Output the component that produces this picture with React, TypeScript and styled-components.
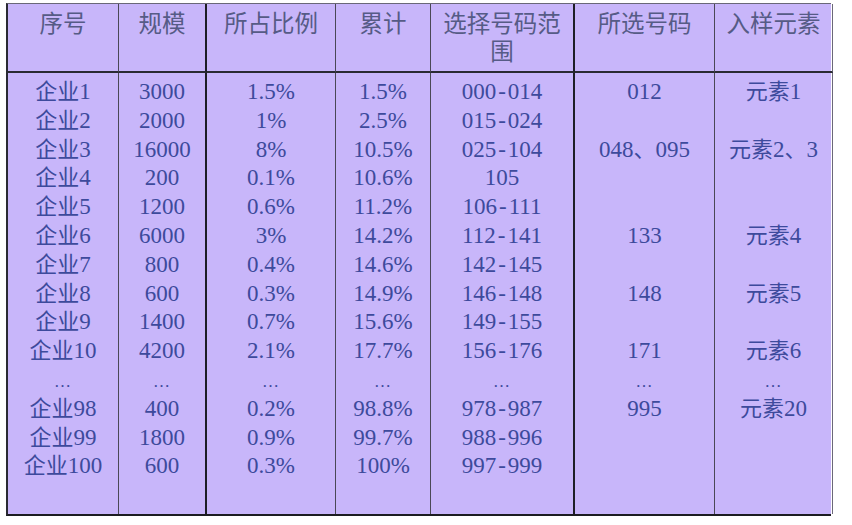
import React from "react";
import styled, { createGlobalStyle } from "styled-components";

const SERIF = `"Liberation Serif", "Times New Roman", "DejaVu Serif", "Noto Sans CJK SC", serif`;

const Global = createGlobalStyle`
  html, body { margin: 0; padding: 0; background: #ffffff; }
  body { font-family: ${SERIF}; }
`;

const Page = styled.div`
  padding: 3px 0 0 6px;
  width: 852px;
  height: 525px;
  box-sizing: border-box;
`;

const Table = styled.div`
  display: grid;
  grid-template-columns: 111px 88px 129px 95px 144px 140px 118px;
  grid-template-rows: 69px 441px;
  width: 825px;
  background: #c8b6fa;
  border-top: 1.5px solid #6a6878;
  border-left: 2px solid #2a2a33;
  border-bottom: 2px solid #1c1c22;
  box-sizing: border-box;
  font-family: ${SERIF};
`;

const Cell = styled.div<{ $heavy?: boolean; $last?: boolean }>`
  box-sizing: border-box;
  border-right: ${(p) =>
    p.$heavy ? "2px solid #1e1e26" : p.$last ? "1.5px solid #6a6878" : "1.5px solid #4a4856"};
  text-align: center;
`;

const HeadCell = styled(Cell)`
  border-bottom: 2px solid #2a2a33;
  padding: 4px 9px 0;
  font-size: 23.5px;
  line-height: 28px;
  color: #565b86;
  font-family: "Noto Sans CJK SC", sans-serif;
`;

const BodyCell = styled(Cell)`
  padding-top: 5px;
  display: flex;
  flex-direction: column;
  align-items: center;
`;

const Line = styled.div`
  height: 28.8px;
  line-height: 28.8px;
  font-size: 23px;
  color: #3d4a9c;
  white-space: nowrap;
  font-family: ${SERIF};
`;

const Dots = styled(Line)`
  font-size: 17px;
  line-height: 31px;
  letter-spacing: 1px;
`;

const Cjk = styled.span`
  font-family: "Noto Sans CJK SC", sans-serif;
  line-height: 1;
  font-size: 22px;
`;

const Sep = styled.span`
  padding: 0 2px;
`;

const ELL = "…";

const headers = ["序号", "规模", "所占比例", "累计", "选择号码范围", "所选号码", "入样元素"];

const heavyCols = [1, 4];

const columns: string[][] = [
  ["企业1", "企业2", "企业3", "企业4", "企业5", "企业6", "企业7", "企业8", "企业9", "企业10", ELL, "企业98", "企业99", "企业100"],
  ["3000", "2000", "16000", "200", "1200", "6000", "800", "600", "1400", "4200", ELL, "400", "1800", "600"],
  ["1.5%", "1%", "8%", "0.1%", "0.6%", "3%", "0.4%", "0.3%", "0.7%", "2.1%", ELL, "0.2%", "0.9%", "0.3%"],
  ["1.5%", "2.5%", "10.5%", "10.6%", "11.2%", "14.2%", "14.6%", "14.9%", "15.6%", "17.7%", ELL, "98.8%", "99.7%", "100%"],
  ["000-014", "015-024", "025-104", "105", "106-111", "112-141", "142-145", "146-148", "149-155", "156-176", ELL, "978-987", "988-996", "997-999"],
  ["012", "", "048、095", "", "", "133", "", "148", "", "171", ELL, "995", "", ""],
  ["元素1", "", "元素2、3", "", "", "元素4", "", "元素5", "", "元素6", ELL, "元素20", "", ""],
];

function renderText(t: string) {
  const parts = t.split(/([\u3000-\u9fff]+|-)/).filter((s) => s.length > 0);
  return parts.map((p, i) => {
    if (p === "-") return <Sep key={i}>-</Sep>;
    if (/[\u3000-\u9fff]/.test(p)) return <Cjk key={i}>{p}</Cjk>;
    return <React.Fragment key={i}>{p}</React.Fragment>;
  });
}

export default function App() {
  return (
    <>
      <Global />
      <Page>
        <Table>
          {headers.map((h, i) => (
            <HeadCell key={h} $heavy={heavyCols.includes(i)} $last={i === headers.length - 1}>
              {h}
            </HeadCell>
          ))}
          {columns.map((col, i) => (
            <BodyCell key={i} $heavy={heavyCols.includes(i)} $last={i === columns.length - 1}>
              {col.map((v, j) =>
                v === ELL ? <Dots key={j}>{v}</Dots> : <Line key={j}>{v ? renderText(v) : "\u00a0"}</Line>
              )}
            </BodyCell>
          ))}
        </Table>
      </Page>
    </>
  );
}
